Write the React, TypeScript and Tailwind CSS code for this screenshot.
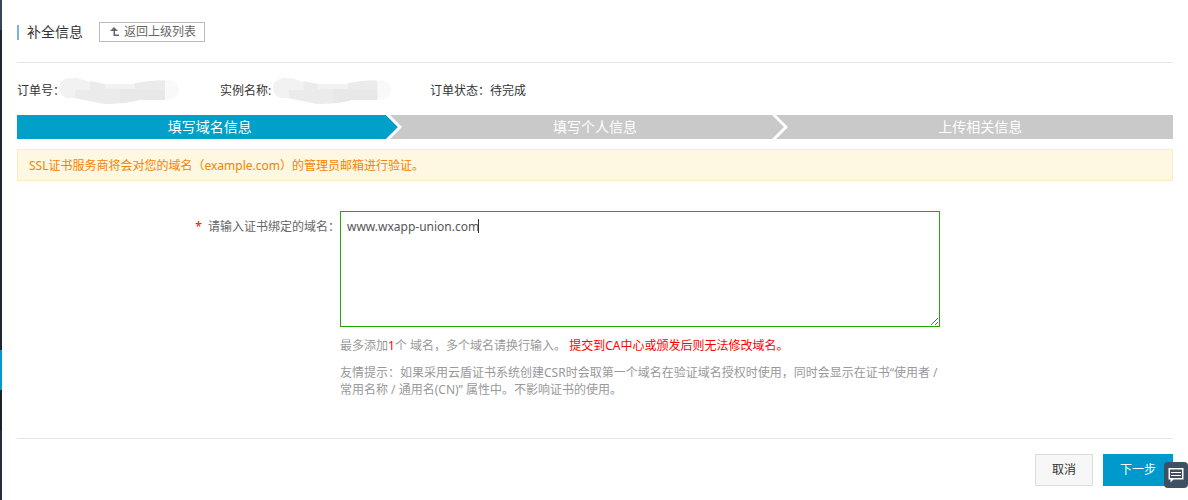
import { useState } from "react";

const steps = ["填写域名信息", "填写个人信息", "上传相关信息"];

function BackIcon() {
  return (
    <svg className="w-2.5 h-2.5" viewBox="0 0 10 10" fill="currentColor">
      <path d="M4 0L8 4H5V7.5H9V9H3.5V4H0Z" />
    </svg>
  );
}

function ChatIcon() {
  return (
    <svg className="w-4 h-4" viewBox="0 0 16 16">
      <path d="M0.5 1H15.5V12.5H5.5L2.5 15.5V12.5H0.5Z" fill="#fff" />
      <path d="M2 2.5H14V11H2Z" fill="#3f5063" />
      <path d="M3 5.5H13M3 8.5H13" stroke="#fff" />
    </svg>
  );
}

function Redacted({ className }: { className: string }) {
  return (
    <svg className={className} viewBox="0 0 120 28" preserveAspectRatio="none" aria-hidden="true">
      <circle cx="110" cy="13" r="10" fill="#f9f9f9" />
      <path d="M10 1H18L31 5L46 7H72L86 5L98 3H106V23H80L66 26L46 27L30 24L16 21H8Q0 19 0 11Q0 3 10 1Z" fill="#f2f2f2" />
      <path d="M16 13H31V4L46 7V12H76V6L91 4H106V23H80L66 26L46 27L30 24L16 21Z" fill="#ebebeb" />
      <path d="M61 12H76V24L61 26ZM76 13H106V23H80L76 24Z" fill="#e8e8e8" />
    </svg>
  );
}

function StepBar({ current }: { current: number }) {
  return (
    <ol className="flex h-6 text-sm leading-6 text-white text-center">
      {steps.map((step, i) => (
        <li
          key={step}
          className={`relative flex-1 ${i === current ? "bg-[#00a0c9]" : "bg-[#c9c9c9]"}`}
        >
          {step}
          {i < steps.length - 1 && (
            <svg className="absolute right-0 top-0 w-4 h-6" viewBox="0 0 16 24">
              <path d="M0 0H16V24H0L12 12Z" fill="#c9c9c9" />
              <path d="M0 0H4L16 12L4 24H0L12 12Z" fill="#fff" />
            </svg>
          )}
        </li>
      ))}
    </ol>
  );
}

export default function App() {
  const [domains, setDomains] = useState("www.wxapp-union.com");

  return (
    <div
      lang="zh-CN"
      className="flex min-h-screen bg-white text-xs text-[#333] font-['Noto_Sans','Noto_Sans_CJK_SC',sans-serif]"
    >
      <div className="flex flex-col w-0.5 shrink-0 bg-[#252d3a]">
        <div className="h-[30px] bg-[#34445a]" />
        <div className="h-80 bg-[#20252f]" />
        <div className="h-10 bg-[#0099cc]" />
        <div className="h-10 bg-[#1c2028]" />
      </div>

      <main className="flex-1 min-w-0 pl-[15px] pr-[15px]">
        <header className="flex items-center h-[63px] pt-0.5 border-b border-[#e1e6eb]">
          <h1 className="flex items-center gap-2 text-sm leading-5">
            <span className="w-0.5 h-[15px] bg-[#7fb2e0]" />
            补全信息
          </h1>
          <button
            type="button"
            className="flex items-center gap-1 h-5 ml-4 pl-2.5 pr-2 border border-[#bbb] text-[#666] leading-4"
          >
            <BackIcon />
            返回上级列表
          </button>
        </header>

        <div className="flex items-center h-[52px] pt-1">
          <div className="flex items-center w-[203px]">
            <span>订单号：</span>
            <Redacted className="w-[120px] h-7 -ml-1.5" />
          </div>
          <div className="flex items-center w-[210px]">
            <span>实例名称:</span>
            <Redacted className="w-[118px] h-7 ml-0.5" />
          </div>
          <div>订单状态：待完成</div>
        </div>

        <StepBar current={0} />

        <p className="mt-2.5 px-[11px] h-8 leading-8 border border-[#fbecc8] bg-[#fef7e1] text-[#f68300]">
          SSL证书服务商将会对您的域名（example.com）的管理员邮箱进行验证。
        </p>

        <form onSubmit={(e) => e.preventDefault()}>
          <div className="flex pt-[30px] pb-10 border-b border-[#e1e6eb]">
            <label
              htmlFor="domains"
              className="w-[323px] shrink-0 pt-[7px] text-right leading-[18px] text-[#666]"
            >
              <span className="mr-1.5 text-[#f00]">*</span>
              请输入证书绑定的域名：
            </label>
            <div className="flex-1 max-w-[608px] text-[#999] leading-[17px]">
              <div className="relative max-w-[600px]">
                <textarea
                  id="domains"
                  value={domains}
                  onChange={(e) => setDomains(e.target.value)}
                  className="block w-full h-29 px-1.5 py-[7px] border border-[#1fa600] text-[#555] leading-4 outline-none"
                />
                <span className="absolute left-[138px] top-2 w-px h-3.5 bg-[#333]" />
              </div>
              <p className="mt-2.5">
                最多添加<span className="text-[#f00]">1</span>个 域名，多个域名请换行输入。{" "}
                <span className="text-[#f00]">提交到CA中心或颁发后则无法修改域名。</span>
              </p>
              <p className="mt-2.5">
                友情提示：如果采用云盾证书系统创建CSR时会取第一个域名在验证域名授权时使用，同时会显示在证书“使用者 /
                常用名称 / 通用名(CN)” 属性中。不影响证书的使用。
              </p>
            </div>
          </div>

          <div className="flex justify-end gap-2.5 pt-[15px]">
            <button type="button" className="w-[58px] h-8 border border-[#ddd] bg-[#f7f7f7]">
              取消
            </button>
            <button type="submit" className="w-[70px] h-8 bg-[#0099cc] text-white">
              下一步
            </button>
          </div>
        </form>
      </main>

      <button
        type="button"
        aria-label="在线咨询"
        className="fixed right-0 bottom-3 flex items-center justify-center w-6 h-[26px] rounded bg-[#3f5063]"
      >
        <ChatIcon />
      </button>
    </div>
  );
}
